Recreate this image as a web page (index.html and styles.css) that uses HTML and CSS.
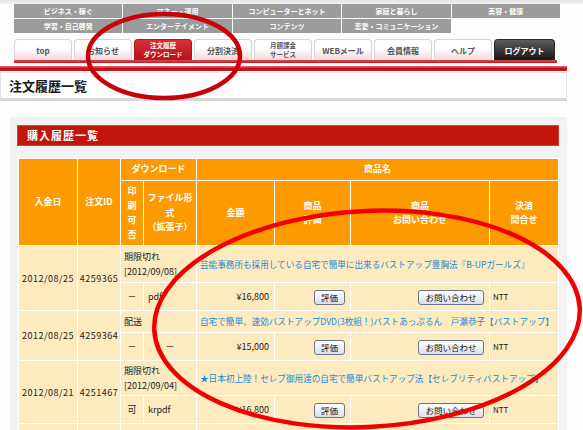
FILE: index.html
```html
<!DOCTYPE html>
<html lang="ja">
<head>
<meta charset="utf-8">
<title>注文履歴一覧</title>
<link rel="stylesheet" href="styles.css">
</head>
<body>
<div class="topband"></div>
<div class="cats">
  <div class="cat">ビジネス・稼ぐ</div>
  <div class="cat">マネー・運用</div>
  <div class="cat">コンピューターとネット</div>
  <div class="cat">家庭と暮らし</div>
  <div class="cat">美容・健康</div>
  <div class="cat">学習・自己啓発</div>
  <div class="cat">エンターテイメント</div>
  <div class="cat">コンテンツ</div>
  <div class="cat">恋愛・コミュニケーション</div>
  <div class="cat cat-empty"></div>
</div>
<div class="tabs">
  <div class="tab">top</div>
  <div class="tab">お知らせ</div>
  <div class="tab tab-active"><span>注文履歴</span><span>ダウンロード</span></div>
  <div class="tab">分割決済</div>
  <div class="tab tab-small"><span>月額課金</span><span>サービス</span></div>
  <div class="tab">WEBメール</div>
  <div class="tab">会員情報</div>
  <div class="tab">ヘルプ</div>
  <div class="tab tab-logout">ログアウト</div>
</div>
<div class="tabline"></div>
<div class="redline"></div>
<div class="pagehead">注文履歴一覧</div>
<div class="panel">
  <div class="secbar">購入履歴一覧</div>
  <table class="orders">
    <colgroup>
      <col class="c1"><col class="c2"><col class="c3"><col class="c4"><col class="c5"><col class="c6"><col class="c7"><col class="c8">
    </colgroup>
    <tr class="h1">
      <th rowspan="2">入金日</th>
      <th rowspan="2">注文ID</th>
      <th colspan="2">ダウンロード</th>
      <th colspan="4">商品名</th>
    </tr>
    <tr class="h2">
      <th>印<br>刷<br>可<br>否</th>
      <th>ファイル形<br>式<br>（拡張子）</th>
      <th>金額</th>
      <th>商品<br>評価</th>
      <th>商品<br>お問い合わせ</th>
      <th>決済<br>問合せ</th>
    </tr>

    <tr class="ra ra-tall">
      <td rowspan="2" class="center num">2012/08/25</td>
      <td rowspan="2" class="center num">4259365</td>
      <td colspan="2" class="status">期限切れ<br>[2012/09/08]</td>
      <td colspan="4" class="title"><a class="link">芸能事務所も採用している自宅で簡単に出来るバストアップ豊胸法『B-UPガールズ』</a></td>
    </tr>
    <tr class="rb">
      <td class="center">－</td>
      <td class="fmt">pdf</td>
      <td class="right">¥16,800</td>
      <td class="right"><button class="btn btn-eval">評価</button></td>
      <td class="right"><button class="btn btn-ask">お問い合わせ</button></td>
      <td class="pay">NTT</td>
    </tr>

    <tr class="ra ra-short">
      <td rowspan="2" class="center num">2012/08/25</td>
      <td rowspan="2" class="center num">4259364</td>
      <td colspan="2" class="status">配送</td>
      <td colspan="4" class="title"><a class="link">自宅で簡単、速効バストアップDVD(3枚組！)バストあっぷるん　戸瀬恭子【バストアップ】</a></td>
    </tr>
    <tr class="rb">
      <td class="center">－</td>
      <td class="center">－</td>
      <td class="right">¥15,000</td>
      <td class="right"><button class="btn btn-eval">評価</button></td>
      <td class="right"><button class="btn btn-ask">お問い合わせ</button></td>
      <td class="pay">NTT</td>
    </tr>

    <tr class="ra ra-mid">
      <td rowspan="2" class="center num">2012/08/21</td>
      <td rowspan="2" class="center num">4251467</td>
      <td colspan="2" class="status">期限切れ<br>[2012/09/04]</td>
      <td colspan="4" class="title"><a class="link">★日本初上陸！セレブ御用達の自宅で簡単バストアップ法【セレブリティバストアップ】</a></td>
    </tr>
    <tr class="rb">
      <td class="center">可</td>
      <td class="fmt">krpdf</td>
      <td class="right">¥16,800</td>
      <td class="right"><button class="btn btn-eval">評価</button></td>
      <td class="right"><button class="btn btn-ask">お問い合わせ</button></td>
      <td class="pay">NTT</td>
    </tr>

    <tr class="ra ra-tall">
      <td></td><td></td><td colspan="2"></td><td colspan="4"></td>
    </tr>
  </table>
</div>

<svg class="annot" width="583" height="430" viewBox="0 0 583 430" xmlns="http://www.w3.org/2000/svg">
  <ellipse cx="164" cy="56" rx="76" ry="42" fill="none" stroke="#c8000a" stroke-width="4.5"/>
  <ellipse cx="367" cy="319" rx="213" ry="108" fill="none" stroke="#f20000" stroke-width="4.5" transform="rotate(-3 367 319)"/>
</svg>
</body>
</html>
```
FILE: styles.css
```css
* { box-sizing: border-box; }
html, body { margin: 0; padding: 0; }
body {
  width: 583px;
  height: 430px;
  overflow: hidden;
  position: relative;
  background: #fdfdfd;
  font-family: "Noto Sans CJK JP", "Noto Sans", sans-serif;
  color: #222;
}

.topband { height: 4px; background: linear-gradient(#e4e4e4, #f3f3f3); }

.cats {
  margin-left: 14px;
  width: 546px;
  display: grid;
  grid-template-columns: repeat(5, 1fr);
  gap: 1px;
  background: #fff;
}
.cat {
  height: 14px;
  background: #9c9c9c;
  color: #fff;
  font-size: 7px;
  font-weight: bold;
  line-height: 14px;
  text-align: center;
  white-space: nowrap;
}
.cat-empty { background: #fdfdfd; }

.tabs { display: flex; gap: 2px; margin: 6px 0 0 14px; }
.tab {
  width: 58px;
  height: 21px;
  border: 1px solid #d4d4d4;
  border-bottom: none;
  border-radius: 4px 4px 0 0;
  background: linear-gradient(#ffffff 40%, #f3d8db);
  display: flex;
  flex-direction: column;
  align-items: center;
  justify-content: center;
  text-align: center;
  font-size: 8px;
  font-weight: bold;
  line-height: 9px;
  color: #555;
  white-space: nowrap;
}
.tab-small, .tab-active { font-size: 6.5px; line-height: 9.5px; }
.tab-active {
  background: linear-gradient(#d93036, #b5121a);
  border-color: #b5121a;
  color: #fff;
}
.tab-logout {
  width: 61px;
  background: linear-gradient(#5c5c5c, #151515);
  border-color: #2a2a2a;
  color: #fff;
}
.tabline { margin-left: 14px; width: 543px; height: 3px; background: linear-gradient(#e04a50, #c8161d); }
.redline { margin-top: 3px; width: 567px; height: 5px; background: linear-gradient(#e87378, #c5141b 45%); }

.pagehead {
  margin-top: 1px;
  width: 567px;
  height: 29px;
  background: #fff;
  border: 1px solid #e3e3e3;
  border-bottom: 3px solid #d8d8d8;
  padding-left: 8px;
  display: flex;
  align-items: center;
  font-size: 13px;
  font-weight: bold;
  color: #1a1a1a;
}

.panel {
  margin: 16px 0 0 10px;
  width: 557px;
  height: 400px;
  background: #f2f2f2;
  padding: 8px 8px 0 7px;
}
.secbar {
  height: 21px;
  background: #c0160b;
  border: 1px solid #d3453c;
  color: #fff;
  font-size: 11px;
  font-weight: bold;
  letter-spacing: 1px;
  line-height: 19px;
  padding-left: 9px;
}

.orders {
  margin: 12px 0 0 1px;
  width: 540px;
  table-layout: fixed;
  border-collapse: collapse;
  font-size: 9px;
}
.c1 { width: 59px; } .c2 { width: 43px; } .c3 { width: 23px; } .c4 { width: 53px; }
.c5 { width: 78px; } .c6 { width: 76px; } .c7 { width: 139px; } .c8 { width: 69px; }

.orders th, .orders td {
  border: 1px solid #fff;
  padding: 0;
  vertical-align: middle;
}
.orders th {
  background: #fd9a00;
  color: #fff;
  font-weight: bold;
  line-height: 14.5px;
  text-align: center;
}
.h1 { height: 22px; }
.h2 { height: 65px; }

.orders td {
  background: #feeabf;
  color: #222;
  line-height: 15px;
  white-space: nowrap;
}
.ra-tall { height: 37px; }
.ra-short { height: 22px; }
.ra-mid { height: 35px; }
.rb { height: 28px; }

.center { text-align: center; }
.num { letter-spacing: 0.5px; }
.right { text-align: right; padding-right: 5px !important; }
.status { padding-left: 3px !important; }
.fmt { padding-left: 4px !important; }
.title { padding-left: 3px !important; }
.link { color: #1c8ad6; font-size: 8.6px; text-decoration: none; }
.pay { padding-left: 3px !important; color: #1c8ad6; font-size: 8px; }

.btn {
  height: 15px;
  border: 1px solid #6b7587;
  border-radius: 3px;
  background: linear-gradient(#ffffff, #dcdfe6);
  font-family: inherit;
  font-size: 8.5px;
  line-height: 12px;
  color: #111;
  padding: 0;
  vertical-align: middle;
}
.btn-eval { width: 31px; }
.btn-ask { width: 66px; }

.annot { position: absolute; left: 0; top: 0; pointer-events: none; }
```
